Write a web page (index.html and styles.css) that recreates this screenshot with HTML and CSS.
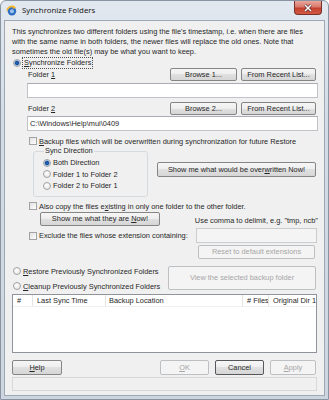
FILE: index.html
```html
<!DOCTYPE html>
<html>
<head>
    <title>Synchronize Folders</title>
    <link rel="stylesheet" href="styles.css">
</head>
<body>
    <div class="window">
        <div class="titlebar">
            <svg class="app-icon" viewBox="0 0 12 12">
                <circle cx="6.5" cy="6.8" r="4.6" fill="#2d6cc0"/>
                <circle cx="6.5" cy="6.8" r="2.2" fill="#9cc4ee"/>
                <path d="M1.2 6.2 A5 5 0 0 1 8.6 2.2" stroke="#f2b82a" stroke-width="1.8" fill="none"/>
                <path d="M7.6 0.4 L11 2.6 L7.4 4.4 Z" fill="#f2b82a"/>
            </svg>
            <span class="title">Synchronize Folders</span>
            <div class="close-btn">
                <svg viewBox="0 0 10 8" width="10" height="8">
                    <path d="M2 1 L8 7 M8 1 L2 7" stroke="#4a2020" stroke-width="2.6"/>
                    <path d="M2 1 L8 7 M8 1 L2 7" stroke="#ffffff" stroke-width="1.5"/>
                </svg>
            </div>
        </div>

        <div class="client">
            <p class="intro">This synchronizes two different folders using the file's timestamp, i.e. when there are files<br>with the same name in both folders, the newer files will replace the old ones. Note that<br>sometimes the old file(s) may be what you want to keep.</p>

            <div class="option-row top-option">
                <span class="radio checked"></span>
                <span class="focus-label"><u>S</u>ynchronize Folders</span>
            </div>

            <div class="folder-row">
                <span class="folder-label">Folder <u>1</u></span>
                <div class="folder-buttons">
                    <button class="btn browse">Browse 1...</button>
                    <button class="btn recent">From Recent List...</button>
                </div>
            </div>
            <div class="path-box"></div>

            <div class="folder-row second">
                <span class="folder-label">Folder <u>2</u></span>
                <div class="folder-buttons">
                    <button class="btn browse">Browse 2...</button>
                    <button class="btn recent">From Recent List...</button>
                </div>
            </div>
            <div class="path-box tight">C:\Windows\Help\mui\0409</div>

            <div class="option-row check-row backup-row">
                <span class="checkbox"></span>
                <span><u>B</u>ackup files which will be overwritten during synchronization for future Restore</span>
            </div>

            <div class="sync-row">
                <fieldset class="group">
                    <legend>Sync Direction</legend>
                    <div class="option-row group-option"><span class="radio checked"></span><span>Both Direction</span></div>
                    <div class="option-row group-option"><span class="radio"></span><span>Folder 1 to Folder 2</span></div>
                    <div class="option-row group-option"><span class="radio"></span><span>Folder 2 to Folder 1</span></div>
                </fieldset>
                <button class="btn overwrite">Show me what would be over<u>w</u>ritten Now!</button>
            </div>

            <div class="option-row check-row copy-row">
                <span class="checkbox"></span>
                <span>Also copy the files e<u>x</u>isting in only one folder to the other folder.</span>
            </div>

            <div class="show-row">
                <button class="btn show-now">Show me what they are <u>N</u>ow!</button>
                <span class="hint">Use comma to delimit, e.g. "tmp, ncb"</span>
            </div>

            <div class="exclude-row">
                <div class="option-row check-row">
                    <span class="checkbox"></span>
                    <span>Exclude the files whose extension containing:</span>
                </div>
                <div class="ext-box"></div>
            </div>

            <div class="reset-row">
                <button class="btn disabled reset">Reset to default extensions</button>
            </div>

            <div class="restore-section">
                <div class="restore-options">
                    <div class="option-row"><span class="radio"></span><span><u>R</u>estore Previously Synchronized Folders</span></div>
                    <div class="option-row"><span class="radio"></span><span><u>C</u>leanup Previously Synchronized Folders</span></div>
                </div>
                <button class="btn disabled view-backup">View the selected backup folder</button>
            </div>

            <div class="listview">
                <div class="list-header">
                    <span class="col col-num">#</span>
                    <span class="col col-time">Last Sync Time</span>
                    <span class="col col-loc">Backup Location</span>
                    <span class="col col-files"># Files</span>
                    <span class="col col-orig">Original Dir 1</span>
                </div>
            </div>

            <div class="dialog-buttons">
                <button class="btn help"><u>H</u>elp</button>
                <button class="btn disabled ok"><u>O</u>K</button>
                <button class="btn cancel">Cancel</button>
                <button class="btn disabled apply"><u>A</u>pply</button>
            </div>

            <div class="status-box"></div>
        </div>
    </div>
</body>
</html>
```

FILE: styles.css
```css
* {
    box-sizing: border-box;
}
body {
    margin: 0;
    font-family: "Liberation Sans", Arial, sans-serif;
    font-size: 7.4px;
    color: #262626;
}
u {
    text-decoration: underline;
    text-underline-offset: 1px;
}
.window {
    width: 329px;
    height: 400px;
    background: linear-gradient(#e2e8ef, #d3dce6 30%, #cdd6e0);
    border: 1px solid #8894a2;
    border-radius: 6px 6px 0 0;
    overflow: hidden;
}
.titlebar {
    height: 19px;
    display: flex;
    align-items: flex-start;
}
.app-icon {
    width: 11px;
    height: 11px;
    margin: 4px 0 0 5px;
}
.title {
    font-family: "Noto Sans", sans-serif;
    font-size: 7.8px;
    line-height: 11px;
    margin: 4px 0 0 5px;
    color: #1a1a1a;
}
.close-btn {
    margin-left: auto;
    margin-right: 6px;
    width: 28px;
    height: 14px;
    border: 1px solid #7a3129;
    border-top: none;
    border-radius: 0 0 4px 4px;
    background: linear-gradient(#e9a89e, #d8796b 45%, #c4412f 55%, #d25a45);
    display: flex;
    align-items: center;
    justify-content: center;
}
.client {
    margin: 0 3px;
    height: 376px;
    background: #f0f0f0;
    border: 1px solid #9ea8b4;
    padding: 0 6px 0 7px;
}
.intro {
    margin: 6px 0 0 0;
    line-height: 10px;
}
.option-row {
    display: flex;
    align-items: center;
    height: 11px;
    white-space: nowrap;
}
.radio {
    width: 8px;
    height: 8px;
    border: 1px solid #a3a3a3;
    border-radius: 50%;
    background: radial-gradient(circle at 40% 35%, #ffffff, #e0e0e0);
    margin-right: 2px;
    flex: none;
}
.radio.checked {
    background: radial-gradient(circle, #2a6fc4 0, #1a4f96 1.6px, #9fc3ea 2.6px, #eef3f8 3.4px);
}
.checkbox {
    width: 8px;
    height: 8px;
    border: 1px solid #a3a3a3;
    background: linear-gradient(135deg, #e0e0e0, #ffffff);
    margin-right: 2px;
    flex: none;
}
.top-option {
    padding-left: 1px;
}
.focus-label {
    outline: 1px dotted #505050;
    padding: 0 1px;
    line-height: 10px;
}
.folder-row {
    display: flex;
    align-items: center;
    height: 13px;
    padding-left: 16px;
}
.folder-row.second {
    margin-top: 4px;
}
.folder-buttons {
    margin-left: auto;
    margin-right: 2px;
    display: flex;
    gap: 4px;
}
.btn {
    font-family: "Liberation Sans", Arial, sans-serif;
    font-size: 7.4px;
    color: #262626;
    height: 13px;
    padding: 0;
    border: 1px solid #858585;
    border-radius: 2px;
    background: linear-gradient(#f6f6f6, #ededed 50%, #e0e0e0 50%, #d6d6d6);
    white-space: nowrap;
}
.btn.disabled {
    color: #a6a6a6;
    border-color: #bcc0c3;
    background: #f4f4f4;
}
.browse {
    width: 67px;
}
.recent {
    width: 75px;
}
.path-box {
    margin: 2px 0 0 15px;
    height: 15px;
    background: #ffffff;
    border: 1px solid #c0c3c8;
    border-top-color: #a9adb3;
    padding-left: 2px;
    line-height: 13px;
}
.path-box.tight {
    margin-top: 1px;
}
.check-row {
    padding-left: 17px;
}
.backup-row {
    margin-top: 4px;
    height: 12px;
}
.sync-row {
    display: flex;
    align-items: flex-start;
}
.group {
    margin: 0 0 0 21px;
    width: 115px;
    border: 1px solid #d5dadf;
    border-radius: 3px;
    padding: 2px 0 4px 9px;
}
.group legend {
    padding: 0 1px;
    margin-left: 1px;
    line-height: 8px;
}
.group-option {
    height: 11.5px;
}
.overwrite {
    margin: 15px 0 0 9px;
    width: 159px;
    height: 15px;
}
.copy-row {
    margin-top: 4px;
}
.show-row {
    display: flex;
    align-items: flex-end;
    height: 14px;
}
.show-now {
    margin-left: 28px;
    width: 120px;
    height: 14px;
}
.hint {
    margin-left: 35px;
    line-height: 10px;
    white-space: nowrap;
}
.exclude-row {
    display: flex;
    align-items: center;
    height: 16px;
    margin-top: 2px;
}
.ext-box {
    margin-left: auto;
    margin-right: 1px;
    width: 121px;
    height: 15px;
    background: #f4f4f4;
    border: 1px solid #cacccf;
}
.reset-row {
    display: flex;
    justify-content: flex-end;
    margin-top: 1px;
}
.reset {
    width: 117px;
    height: 14px;
    margin-right: 3px;
}
.restore-section {
    display: flex;
    align-items: flex-start;
    margin-top: 7px;
}
.restore-options {
    display: flex;
    flex-direction: column;
    gap: 4px;
    padding-left: 1px;
}
.view-backup {
    margin-left: auto;
    margin-right: 2px;
    width: 148px;
    height: 24px;
}
.listview {
    margin: 2px 1px 0 0;
    height: 59px;
    background: #ffffff;
    border: 1px solid #8f939b;
    overflow: hidden;
}
.list-header {
    display: flex;
    height: 12px;
    border-bottom: 1px solid #f0f0f0;
    white-space: nowrap;
}
.col {
    line-height: 11px;
    border-right: 1px solid #e4e4e4;
    padding-left: 4px;
    flex: none;
    overflow: hidden;
}
.col-num {
    width: 20px;
}
.col-time {
    width: 73px;
}
.col-loc {
    width: 137px;
    padding-left: 3px;
}
.col-files {
    width: 26px;
    padding-left: 4px;
}
.col-orig {
    border-right: none;
    width: 60px;
}
.dialog-buttons {
    display: flex;
    margin-top: 7px;
    gap: 6px;
}
.dialog-buttons .btn {
    height: 15px;
}
.help {
    width: 50px;
}
.ok {
    margin-left: auto;
    width: 49px;
}
.cancel {
    width: 49px;
    border-color: #56585c;
}
.apply {
    width: 46px;
    margin-right: 2px;
}
.status-box {
    margin: 2px 1px 0 0;
    height: 14px;
    border: 1px solid #d6d8db;
    background: #f0f0f0;
}
```
